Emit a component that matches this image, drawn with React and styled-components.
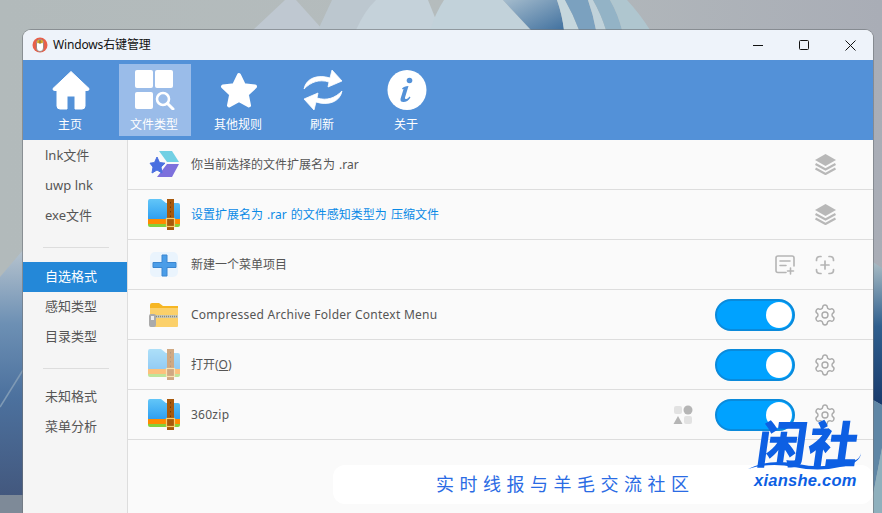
import React from "react";
import styled, { createGlobalStyle } from "styled-components";
import { Settings } from "lucide-react";

const Global = createGlobalStyle`
  html, body { margin: 0; padding: 0; width: 882px; height: 513px; overflow: hidden; }
  body { font-family: "Noto Sans", "Noto Sans CJK SC", sans-serif; }
  * { box-sizing: border-box; }
`;

const CJK = `"Noto Sans", "Noto Sans CJK SC", sans-serif`;

const Desktop = styled.div`
  position: relative;
  width: 882px;
  height: 513px;
  overflow: hidden;
  background: linear-gradient(90deg, #b2babb 0%, #b5bcbd 50%, #a9adb6 100%);
`;
const Wallpaper = styled.svg`
  position: absolute;
  inset: 0;
  filter: blur(0.7px);
`;
const Win = styled.div`
  position: absolute;
  left: 23px;
  top: 30px;
  width: 850px;
  height: 483px;
  border-radius: 8px 8px 0 0;
  box-shadow: 0 0 0 1px rgba(110, 115, 120, 0.6);
  display: flex;
  flex-direction: column;
  overflow: hidden;
  background: #fafafa;
`;
const TitleBar = styled.div`
  height: 30px;
  flex: none;
  display: flex;
  align-items: center;
  padding-left: 9px;
  background: #eef3fa;
`;
const AppIcon = styled.svg`
  width: 16px;
  height: 16px;
  flex: none;
`;
const Title = styled.div`
  margin-left: 5px;
  padding-bottom: 2px;
  font: 12px ${CJK};
  letter-spacing: -0.15px;
  color: #111;
  flex: 1;
`;
const WinBtn = styled.div`
  width: 46px;
  height: 30px;
  display: flex;
  align-items: center;
  justify-content: center;
`;
const Toolbar = styled.div`
  height: 80px;
  flex: none;
  background: #5391d8;
  display: flex;
  align-items: center;
  gap: 12px;
  padding-left: 12px;
`;
const Tool = styled.div`
  width: 72px;
  height: 72px;
  display: flex;
  flex-direction: column;
  align-items: center;
  padding-top: 6px;
  background: ${(p) => (p.$active ? "#9abce9" : "transparent")};
  color: #fff;
  font: 12px/16px ${CJK};
`;
const ToolIcon = styled.svg`
  width: 40px;
  height: 40px;
  margin-bottom: 7px;
  flex: none;
`;
const ToolLabel = styled.span`
  margin-right: 2px;
`;
const Body = styled.div`
  flex: 1;
  display: flex;
  min-height: 0;
`;
const Side = styled.div`
  width: 105px;
  flex: none;
  background: #f5f5f5;
  border-right: 1px solid #ddd;
  padding-top: 1px;
`;
const SideItem = styled.div`
  height: 30px;
  padding: 0 0 3px 22px;
  display: flex;
  align-items: center;
  font: 13px ${CJK};
  color: ${(p) => (p.$active ? "#fff" : "#555")};
  background: ${(p) => (p.$active ? "#2488d8" : "transparent")};
`;
const SideGap = styled.div`
  height: ${(p) => p.$h}px;
  padding: 16px 18px 0 20px;
  &::before {
    content: "";
    display: block;
    height: 1px;
    background: #ddd;
  }
`;
const Rows = styled.div`
  flex: 1;
  min-width: 0;
`;
const Row = styled.div`
  height: 50px;
  border-bottom: 1px solid #ddd;
  display: flex;
  align-items: center;
  padding: 0 38px 0 20px;
`;
const RowIcon = styled.svg`
  width: 32px;
  height: 32px;
  flex: none;
  margin-right: 11px;
  opacity: ${(p) => (p.$fade ? 0.5 : 1)};
`;
const RowText = styled.div`
  flex: 1;
  padding-bottom: ${(p) => (p.$latin ? "0" : "2px")};
  font: 12px ${CJK};
  word-spacing: ${(p) => (p.$latin ? "0" : "1px")};
  letter-spacing: ${(p) => (p.$latin ? "0.26px" : "0")};
  color: ${(p) => (p.$link ? "#0a8ae6" : "#555")};
`;
const Actions = styled.div`
  display: flex;
  align-items: center;
  gap: 20px;
`;
const Small = styled.svg`
  width: 20px;
  height: 20px;
  flex: none;
`;
const GearWrap = styled.div`
  width: 20px;
  height: 20px;
  display: flex;
  align-items: center;
  justify-content: center;
  flex: none;
`;
const Switch = styled.div`
  width: 80px;
  height: 32px;
  border-radius: 16px;
  background: #00a2ff;
  border: 2px solid #0a8adb;
  display: flex;
  align-items: center;
  justify-content: flex-end;
  padding-right: 1px;
  &::after {
    content: "";
    width: 26px;
    height: 26px;
    border-radius: 50%;
    background: #fff;
  }
`;
const Band = styled.div`
  position: absolute;
  left: 310px;
  right: 0;
  top: 435px;
  height: 39px;
  background: #fff;
  border-radius: 12px;
  display: flex;
  align-items: center;
  padding: 0 0 3px 103px;
  font: 18px "Noto Sans CJK SC", sans-serif;
  letter-spacing: 5.5px;
  color: #2a6be4;
`;
const Mark = styled.div`
  position: absolute;
  left: 748px;
  top: 412px;
  width: 115px;
  height: 75px;
`;
const MarkCn = styled.div`
  position: absolute;
  left: 10px;
  top: -2px;
  font: 900 50px/62px "Noto Sans CJK SC", sans-serif;
  letter-spacing: 1px;
  color: #0d5fe3;
  transform: skewX(-8deg);
  white-space: nowrap;
`;
const MarkSwoosh = styled.svg`
  position: absolute;
  left: 0;
  top: 40px;
`;
const MarkEn = styled.div`
  position: absolute;
  left: 6px;
  top: 59px;
  font: italic 700 16.5px/18px "Liberation Sans", sans-serif;
  letter-spacing: 0.25px;
  color: #0d5fe3;
  white-space: nowrap;
`;

const Folder = ({ fade }) => (
  <RowIcon viewBox="0 0 32 32" $fade={fade}>
    <defs>
      <linearGradient id="fb" x1="0" y1="0" x2="0" y2="1">
        <stop offset="0" stopColor="#62c6f8" />
        <stop offset="1" stopColor="#2f9ff0" />
      </linearGradient>
    </defs>
    <path d="M0 2Q0 0 2 0H13L18 4H30Q32 4 32 6V20H0Z" fill="url(#fb)" />
    <rect y="20" width="32" height="5" fill="#ff8a00" />
    <path d="M0 25H32V26Q32 28 30 28H2Q0 28 0 26Z" fill="#86cf3a" />
    <rect x="19" y="0" width="7" height="31" fill="#a85a0c" />
    <path d="M22.5 3V18" stroke="#6e3a06" strokeWidth="1" strokeDasharray="1.5 3" />
    <rect x="18.5" y="19.5" width="8" height="8" fill="none" stroke="#f5cd6e" strokeWidth="1.2" />
  </RowIcon>
);

const Layers = () => (
  <Small viewBox="0 0 21 21" style={{ width: 21, height: 21, margin: "0 -0.5px" }}>
    <path d="M10.5 0L21 6L10.5 12L0 6Z" fill="#b8b8b8" />
    <path d="M0.5 10L10.5 15.5L20.5 10M0.5 14.5L10.5 20L20.5 14.5" fill="none" stroke="#b8b8b8" strokeWidth="2.2" />
  </Small>
);

const Gear = () => (
  <GearWrap>
    <Settings size={24} color="#aaa" strokeWidth={1.4} style={{ flex: "none" }} />
  </GearWrap>
);

const sideA = ["lnk文件", "uwp lnk", "exe文件"];
const sideB = ["自选格式", "感知类型", "目录类型"];
const sideC = ["未知格式", "菜单分析"];

export default function App() {
  return (
    <Desktop>
      <Global />
      <Wallpaper width="882" height="513" viewBox="0 0 882 513">
        <defs>
          <linearGradient id="wb" x1="0" y1="0" x2="0" y2="1">
            <stop offset="0" stopColor="#b6c3ce" />
            <stop offset="0.3" stopColor="#6d90b4" />
            <stop offset="0.6" stopColor="#4c719e" />
            <stop offset="1" stopColor="#43587e" />
          </linearGradient>
          <linearGradient id="wr" x1="0" y1="0" x2="0" y2="1">
            <stop offset="0" stopColor="#a9bcc4" />
            <stop offset="0.45" stopColor="#2f5f8e" />
            <stop offset="1" stopColor="#183a6c" />
          </linearGradient>
          <linearGradient id="wc" x1="0" y1="0" x2="1" y2="1">
            <stop offset="0" stopColor="#a5bccd" />
            <stop offset="1" stopColor="#41719f" />
          </linearGradient>
        </defs>
        <path d="M253 30L285 0H296L323 30Z" fill="#bfc8d1" />
        <path d="M318 30L332 0H420L440 30Z" fill="#bcc7cf" />
        <path d="M356 30Q365 10 376 0H428L440 30Z" fill="#c5d2da" />
        <path d="M430 30Q436 12 444 0H503L531 30Z" fill="#c2d2da" />
        <path d="M503 0H557Q562 14 564 30H531Z" fill="url(#wc)" />
        <path d="M557 0H565Q573 14 579 30H564Q562 14 557 0Z" fill="#c6d7dd" />
        <path d="M565 0H588Q593 14 596 30H579Q573 14 565 0Z" fill="#7ba1bf" />
        <path d="M588 0H593Q601 14 606 30H596Q593 14 588 0Z" fill="#c0d2da" />
        <path d="M593 0H610Q618 14 622 30H606Q601 14 593 0Z" fill="#93b3c6" />
        <path d="M610 0H627Q640 14 650 30H622Q618 14 610 0Z" fill="#afc6cf" />
        <path d="M0 277L23 250V495H0Z" fill="url(#wb)" />
        <path d="M0 407L23 370" stroke="#7f9ab5" strokeWidth="1.5" fill="none" />
        <rect y="495" width="23" height="18" fill="#7e8a98" />
        <path d="M873 262L882 268V405L873 400Z" fill="url(#wr)" />
        <path d="M873 400L882 405V448L873 495Z" fill="#5f86a5" />
        <path d="M873 495L882 448V513H873Z" fill="#8fb0bd" />
      </Wallpaper>
      <Win>
        <TitleBar>
          <AppIcon viewBox="0 0 16 16">
            <circle cx="8" cy="8" r="7.5" fill="#e8604a" />
            <path d="M4.5 6Q4.5 2.5 8 2.5T11.5 6V11Q11.5 14.5 8 14.5T4.5 11Z" fill="#fff" stroke="#777" strokeWidth="0.7" />
            <rect x="5.2" y="3.2" width="5.6" height="3" fill="#d9a520" />
            <path d="M8 3V7" stroke="#555" strokeWidth="0.8" />
          </AppIcon>
          <Title>Windows右键管理</Title>
          <WinBtn>
            <svg width="10" height="10" viewBox="0 0 10 10"><path d="M0 5.5H10" stroke="#111" strokeWidth="1" /></svg>
          </WinBtn>
          <WinBtn>
            <svg width="10" height="10" viewBox="0 0 10 10"><rect x="0.5" y="0.5" width="9" height="9" rx="1" fill="none" stroke="#111" strokeWidth="1" /></svg>
          </WinBtn>
          <WinBtn>
            <svg width="11" height="11" viewBox="0 0 11 11"><path d="M0.5 0.5L10.5 10.5M10.5 0.5L0.5 10.5" stroke="#111" strokeWidth="1" /></svg>
          </WinBtn>
        </TitleBar>
        <Toolbar>
          <Tool>
            <ToolIcon viewBox="0 0 40 40">
              <path d="M20 1.5L38 18.5Q38.5 20.5 36 20.5H34V36Q34 39 31 39H24V26H16V39H9Q6 39 6 36V20.5H4Q1.5 20.5 2 18.5Z" fill="#fff" stroke="#fff" strokeLinejoin="round" strokeWidth="1" />
            </ToolIcon>
            <ToolLabel>主页</ToolLabel>
          </Tool>
          <Tool $active>
            <ToolIcon viewBox="0 0 40 40">
              <rect x="0" y="0" width="18" height="18" rx="2" fill="#fff" />
              <rect x="20" y="0" width="18" height="18" rx="2" fill="#fff" />
              <rect x="0" y="22" width="18" height="17" rx="2" fill="#fff" />
              <circle cx="28" cy="29" r="6" fill="none" stroke="#fff" strokeWidth="2.6" />
              <path d="M32.5 33.5L38 39" stroke="#fff" strokeWidth="3" strokeLinecap="round" />
            </ToolIcon>
            <ToolLabel>文件类型</ToolLabel>
          </Tool>
          <Tool>
            <ToolIcon viewBox="0 0 40 40">
              <path d="M20 5L24.8 15.2L36 16.6L27.8 24.3L30 35.4L20 30L10 35.4L12.2 24.3L4 16.6L15.2 15.2Z" fill="#fff" stroke="#fff" strokeWidth="4" strokeLinejoin="round" />
            </ToolIcon>
            <ToolLabel>其他规则</ToolLabel>
          </Tool>
          <Tool>
            <ToolIcon viewBox="0 0 40 40">
              <path d="M1 19C3 8 15 4 27 8L29 0L39 11L25 17L26 12C16 9 8 12 1 19Z" fill="#fff" stroke="#fff" strokeWidth="0.8" strokeLinejoin="round" />
              <path d="M39 21C37 32 25 36 13 32L11 40L1 29L15 23L14 28C24 31 32 28 39 21Z" fill="#fff" stroke="#fff" strokeWidth="0.8" strokeLinejoin="round" />
            </ToolIcon>
            <ToolLabel>刷新</ToolLabel>
          </Tool>
          <Tool>
            <ToolIcon viewBox="0 0 40 40">
              <ellipse cx="20" cy="20" rx="19.5" ry="20" fill="#fff" />
              <circle cx="22.5" cy="10.5" r="2.8" fill="#5391d8" />
              <path d="M15 18.5Q17 16 21.5 16L18 27.5Q17.7 29.5 19.5 29Q21 28.5 22.5 26.5L23.5 27.5Q20.5 32 16.5 32Q12.8 32 13.6 28.5L16.5 19.2Q16 18.5 15.8 19.4Z" fill="#5391d8" />
            </ToolIcon>
            <ToolLabel>关于</ToolLabel>
          </Tool>
        </Toolbar>
        <Body>
          <Side>
            {sideA.map((t) => <SideItem key={t}>{t}</SideItem>)}
            <SideGap $h={31} />
            {sideB.map((t, i) => <SideItem key={t} $active={i === 0}>{t}</SideItem>)}
            <SideGap $h={30} />
            {sideC.map((t) => <SideItem key={t}>{t}</SideItem>)}
          </Side>
          <Rows>
            <Row>
              <RowIcon viewBox="0 0 32 32">
                <path d="M11 2H24L31 13H19Z" fill="#72d0e4" />
                <path d="M19 15H31L24 28H9Z" fill="#7d70dc" />
                <path d="M9 8L11.5 13.5L17 14.2L13 18L14 24L9 21L4 24L5 18L2 14.2L6.5 13.5Z" fill="#4a6fe0" stroke="#4a6fe0" strokeLinejoin="round" />
              </RowIcon>
              <RowText>你当前选择的文件扩展名为 .rar</RowText>
              <Actions><Layers /></Actions>
            </Row>
            <Row>
              <Folder />
              <RowText $link>设置扩展名为 .rar 的文件感知类型为 压缩文件</RowText>
              <Actions><Layers /></Actions>
            </Row>
            <Row>
              <RowIcon viewBox="0 0 32 32">
                <rect x="2" y="3" width="28" height="25" rx="5" fill="#eaf4fd" />
                <path d="M14 6H19V13.5H28V18.5H19V27H14V18.5H5V13.5H14Z" fill="#4a9de8" stroke="#3a86d0" strokeLinejoin="round" />
              </RowIcon>
              <RowText>新建一个菜单项目</RowText>
              <Actions>
                <Small viewBox="0 0 20 20" fill="none" stroke="#b5b5b5" strokeWidth="1.6" strokeLinecap="round">
                  <path d="M11 17.5H3Q1 17.5 1 15.5V3Q1 1 3 1H17Q19 1 19 3V11" />
                  <path d="M5 6H15M5 10.5H11M15.5 13V19M12.5 16H18.5" />
                </Small>
                <Small viewBox="0 0 20 20" fill="none" stroke="#b5b5b5" strokeWidth="1.7" strokeLinecap="round">
                  <path d="M1.5 5.5V5Q1.5 1.5 5 1.5H6M14 1.5H15Q18.5 1.5 18.5 5V5.5M18.5 14.5V15Q18.5 18.5 15 18.5H14M6 18.5H5Q1.5 18.5 1.5 15V14.5" />
                  <path d="M10 6V14M6 10H14" />
                </Small>
              </Actions>
            </Row>
            <Row>
              <RowIcon viewBox="0 0 32 32">
                <path d="M2 6Q2 4 4 4H11L15 7H30V11H2Z" fill="#f6b622" />
                <path d="M2 9H30V27Q30 28 29 28H3Q2 28 2 27Z" fill="#fbd06a" />
                <rect x="2" y="16" width="28" height="3" fill="#c8c8b8" />
                <path d="M8 17.5H30" stroke="#8a8a7a" strokeWidth="1.5" strokeDasharray="1 1" />
                <rect x="1" y="15" width="7" height="13" rx="2" fill="#aaa" />
                <rect x="3" y="17" width="3" height="4" fill="#eee" />
              </RowIcon>
              <RowText $latin>Compressed Archive Folder Context Menu</RowText>
              <Actions><Switch /><Gear /></Actions>
            </Row>
            <Row>
              <Folder fade />
              <RowText>打开(<u>O</u>)</RowText>
              <Actions><Switch /><Gear /></Actions>
            </Row>
            <Row>
              <Folder />
              <RowText $latin>360zip</RowText>
              <Actions>
                <Small viewBox="0 0 20 20" style={{ marginRight: 2 }}>
                  <rect x="1" y="1" width="8" height="8" rx="2" fill="#e2e2e2" />
                  <circle cx="15" cy="5" r="4.5" fill="#b5b5b5" />
                  <path d="M5 11L9.5 19H0.5Z" fill="#b5b5b5" />
                  <rect x="11" y="11" width="8" height="8" rx="2" fill="#e2e2e2" />
                </Small>
                <Switch />
                <Gear />
              </Actions>
            </Row>
          </Rows>
        </Body>
        <Band>实时线报与羊毛交流社区</Band>
      </Win>
      <Mark>
        <MarkCn>闲社</MarkCn>
        <MarkSwoosh width="114" height="22" viewBox="0 0 114 22">
          <path d="M0 17Q22 6 50 12T108 8Q112 6 113 1Q112 12 92 15Q70 20 46 15Q22 10 0 17Z" fill="#0d5fe3" />
        </MarkSwoosh>
        <MarkEn>xianshe.com</MarkEn>
      </Mark>
    </Desktop>
  );
}
